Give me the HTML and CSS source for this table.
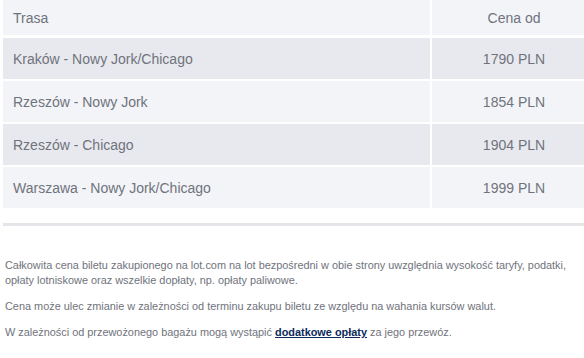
FILE: index.html
```html
<!DOCTYPE html>
<html lang="pl">
<head>
<meta charset="utf-8">
<link rel="stylesheet" href="styles.css">
</head>
<body>
<div class="page">
  <div class="table">
    <div class="row head">
      <div class="cell route">Trasa</div>
      <div class="cell price">Cena od</div>
    </div>
    <div class="row dark">
      <div class="cell route">Kraków - Nowy Jork/Chicago</div>
      <div class="cell price">1790 PLN</div>
    </div>
    <div class="row light">
      <div class="cell route">Rzeszów - Nowy Jork</div>
      <div class="cell price">1854 PLN</div>
    </div>
    <div class="row dark">
      <div class="cell route">Rzeszów - Chicago</div>
      <div class="cell price">1904 PLN</div>
    </div>
    <div class="row light">
      <div class="cell route">Warszawa - Nowy Jork/Chicago</div>
      <div class="cell price">1999 PLN</div>
    </div>
  </div>
  <div class="rule"></div>
  <div class="notes">
    <p>Całkowita cena biletu zakupionego na lot.com na lot bezpośredni w obie strony uwzględnia wysokość taryfy, podatki, opłaty lotniskowe oraz wszelkie dopłaty, np. opłaty paliwowe.</p>
    <p>Cena może ulec zmianie w zależności od terminu zakupu biletu ze względu na wahania kursów walut.</p>
    <p>W zależności od przewożonego bagażu mogą wystąpić <a href="#">dodatkowe opłaty</a> za jego przewóz.</p>
  </div>
</div>
</body>
</html>
```

FILE: styles.css
```css
html, body {
  margin: 0;
  padding: 0;
  background: #ffffff;
  overflow: hidden;
}
.page {
  width: 593px;
  padding-left: 3px;
  font-family: "Liberation Sans", Arial, sans-serif;
  color: #6f737c;
}
.table {
  display: flex;
  flex-direction: column;
  gap: 2px;
}
.row {
  display: flex;
  gap: 2px;
  height: 41px;
}
.row.head {
  height: 35px;
  margin-bottom: 1px;
}
.cell {
  display: flex;
  align-items: center;
  font-size: 14px;
}
.route {
  width: 427px;
  padding-left: 10px;
  box-sizing: border-box;
}
.price {
  flex: 1;
  justify-content: center;
}
.head .cell, .light .cell {
  background: #f3f4f8;
}
.dark .cell {
  background: #e8e9ee;
}
.rule {
  height: 3px;
  background: #e4e5e8;
  margin-top: 15px;
}
.notes {
  width: 574px;
  padding: 32px 0 0 2px;
  font-size: 10.9px;
  line-height: 15px;
}
.notes p {
  margin: 0 0 11px 0;
}
.notes a {
  color: #0c2a5c;
  font-weight: bold;
  text-decoration: underline;
}
```
